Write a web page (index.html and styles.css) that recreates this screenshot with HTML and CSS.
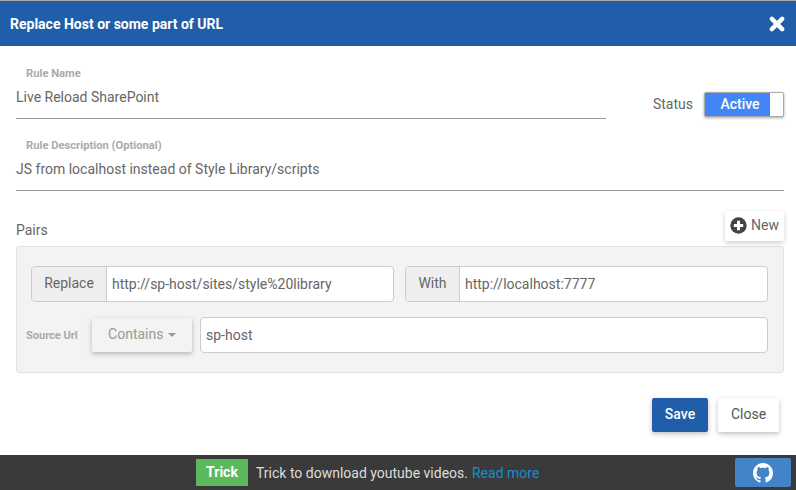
FILE: index.html
```html
<!DOCTYPE html>
<html lang="en">
<head>
  <meta charset="UTF-8" />
  <title>Replace Host</title>
  <link rel="stylesheet" href="styles.css">
</head>
<body>
  <div class="modal-header">
    <h1>Replace Host or some part of URL</h1>
    <svg class="close-x" viewBox="0 0 14 14" width="16" height="16"><path d="M2.5 2.5l9 9M11.5 2.5l-9 9" stroke="#fff" stroke-width="3.8" stroke-linecap="round" fill="none"/></svg>
  </div>

  <div class="modal-body">
    <div class="name-row">
      <div class="field name-field">
        <label>Rule Name</label>
        <div class="field-value">Live Reload SharePoint</div>
      </div>
      <div class="status">
        <span class="status-label">Status</span>
        <div class="switch">
          <span class="switch-on">Active</span>
          <span class="switch-handle"></span>
        </div>
      </div>
    </div>

    <div class="field desc-field">
      <label>Rule Description (Optional)</label>
      <div class="field-value">JS from localhost instead of Style Library/scripts</div>
    </div>

    <div class="pairs-head">
      <span>Pairs</span>
      <button class="new-btn">
        <svg viewBox="0 0 16 16" width="17" height="17"><circle cx="8" cy="8" r="7.7" fill="#444"/><path d="M8 3.6v8.8M3.6 8h8.8" stroke="#fff" stroke-width="2.8"/></svg>
        New
      </button>
    </div>

    <div class="pairs-panel">
      <div class="pair-row">
        <div class="input-group">
          <span class="addon addon-replace">Replace</span>
          <span class="input-text">http://sp-host/sites/style%20library</span>
        </div>
        <div class="input-group">
          <span class="addon addon-with">With</span>
          <span class="input-text">http://localhost:7777</span>
        </div>
      </div>
      <div class="source-row">
        <label>Source Url</label>
        <button class="contains-btn">Contains <i class="caret"></i></button>
        <div class="source-input">sp-host</div>
      </div>
    </div>

    <div class="actions">
      <button class="btn-save">Save</button>
      <button class="btn-close">Close</button>
    </div>
  </div>

  <div class="footer">
    <span class="badge">Trick</span>
    <span class="footer-text">Trick to download youtube videos.</span>
    <a class="footer-link">Read more</a>
    <button class="github">
      <svg viewBox="0 0 16 16" width="20" height="20"><path fill="#fff" d="M8 0C3.58 0 0 3.58 0 8c0 3.54 2.29 6.53 5.47 7.59.4.07.55-.17.55-.38 0-.19-.01-.82-.01-1.49-2.01.37-2.53-.49-2.69-.94-.09-.23-.48-.94-.82-1.13-.28-.15-.68-.52-.01-.53.63-.01 1.08.58 1.23.82.72 1.21 1.87.87 2.33.66.07-.52.28-.87.51-1.07-1.78-.2-3.64-.89-3.64-3.95 0-.87.31-1.59.82-2.15-.08-.2-.36-1.02.08-2.12 0 0 .67-.21 2.2.82.64-.18 1.32-.27 2-.27s1.36.09 2 .27c1.53-1.04 2.2-.82 2.2-.82.44 1.1.16 1.92.08 2.12.51.56.82 1.27.82 2.15 0 3.07-1.87 3.75-3.65 3.95.29.25.54.73.54 1.48 0 1.07-.01 1.93-.01 2.2 0 .21.15.46.55.38A8.01 8.01 0 0 0 16 8c0-4.42-3.58-8-8-8z"/></svg>
    </button>
  </div>
</body>
</html>
```

FILE: styles.css
```css
* {
  box-sizing: border-box;
}
html, body {
  height: 100%;
}
body {
  margin: 0;
  display: flex;
  flex-direction: column;
  overflow: hidden;
  font-family: Roboto, "Liberation Sans", sans-serif;
  font-size: 14px;
  color: #666;
  background: #fff;
}
button {
  font-family: inherit;
  border: none;
  cursor: pointer;
}
.modal-header {
  height: 46px;
  padding: 0 11px 0 10px;
  display: flex;
  align-items: center;
  justify-content: space-between;
  background: #205ea9;
  border-top: 1px solid #a9a9a9;
}
.modal-header h1 {
  margin: 0;
  font-size: 14px;
  font-weight: 700;
  color: #fff;
}
.modal-body {
  flex: 1;
  padding: 21px 12px 0 16px;
}
.name-row {
  display: flex;
  align-items: flex-end;
}
.field label {
  display: block;
  padding-left: 10px;
  font-size: 11.2px;
  line-height: 14px;
  font-weight: 700;
  color: #aaa;
}
.field-value {
  height: 38px;
  padding-top: 8px;
  line-height: 16px;
  font-size: 14px;
  color: #666;
  border-bottom: 1px solid #999;
}
.name-field {
  width: 590px;
}
.desc-field {
  margin-top: 20px;
}
.status {
  margin-left: 47px;
  margin-bottom: 2px;
  display: flex;
  align-items: center;
  gap: 11px;
  font-size: 14px;
  color: #666;
}
.status-label {
  padding-bottom: 2px;
}
.switch {
  width: 80px;
  height: 25px;
  display: flex;
  border: 1px solid #aaa;
  border-radius: 2px;
  background: #fff;
  box-shadow: 0 1px 3px rgba(0,0,0,0.35);
}
.switch-on {
  width: 65px;
  padding-left: 5px;
  text-align: center;
  line-height: 23px;
  font-size: 14px;
  font-weight: 500;
  color: #fff;
  background: #4285f4;
}
.switch-handle {
  flex: 1;
}
.pairs-head {
  margin-top: 20px;
  height: 35px;
  display: flex;
  justify-content: space-between;
  align-items: flex-start;
}
.pairs-head > span {
  margin-top: 11px;
  font-size: 14px;
  line-height: 16px;
  color: #666;
}
.new-btn {
  width: 59px;
  height: 30px;
  padding: 0 0 2px 5px;
  display: flex;
  align-items: center;
  gap: 4px;
  font-size: 14px;
  color: #666;
  background: #fff;
  border-radius: 2px;
  box-shadow: 0 2px 5px rgba(0,0,0,0.2);
}
.pairs-panel {
  height: 127px;
  padding: 19px 15px 0 14px;
  background: #f3f3f3;
  border: 1px solid #e0e0e0;
  border-radius: 3px;
}
.pair-row {
  display: flex;
  gap: 11px;
}
.input-group {
  flex: 1;
  height: 36px;
  display: flex;
  align-items: center;
  background: #fff;
  border: 1px solid #ccc;
  border-radius: 4px;
  overflow: hidden;
}
.addon {
  height: 100%;
  padding-bottom: 2px;
  display: flex;
  align-items: center;
  justify-content: center;
  font-size: 14px;
  color: #666;
  background: #eee;
  border-right: 1px solid #ccc;
}
.addon-replace {
  width: 75px;
}
.addon-with {
  width: 54px;
}
.input-text, .source-input {
  padding-left: 5px;
  font-size: 14px;
  color: #666;
}
.source-row {
  margin-top: 15px;
  display: flex;
  align-items: center;
}
.source-row label {
  width: 66px;
  margin-left: -5px;
  font-size: 11px;
  font-weight: 700;
  color: #aaa;
}
.contains-btn {
  width: 100px;
  height: 34px;
  margin-right: 8px;
  padding: 0 0 3px;
  font-size: 14px;
  color: #999;
  background: #f3f3f3;
  border-radius: 2px;
  box-shadow: 0 2px 5px rgba(0,0,0,0.25);
}
.caret {
  display: inline-block;
  margin-left: 1px;
  vertical-align: middle;
  border-top: 4px solid #999;
  border-left: 4px solid transparent;
  border-right: 4px solid transparent;
}
.source-input {
  flex: 1;
  height: 36px;
  line-height: 34px;
  background: #fff;
  border: 1px solid #ccc;
  border-radius: 4px;
}
.actions {
  margin-top: 25px;
  padding-right: 5px;
  display: flex;
  justify-content: flex-end;
  gap: 10px;
}
.actions button {
  height: 34px;
  padding: 0 0 3px;
  font-size: 14px;
  border-radius: 2px;
  box-shadow: 0 2px 5px rgba(0,0,0,0.25);
}
.btn-save {
  width: 56px;
  font-weight: 500;
  color: #fff;
  background: #205ea9;
}
.btn-close {
  width: 61px;
  color: #555;
  background: #fff;
}
.footer {
  height: 35px;
  padding: 0 5px 0 196px;
  display: flex;
  align-items: center;
  font-size: 14px;
  background: #3a3a3a;
}
.badge {
  width: 52px;
  height: 27px;
  line-height: 27px;
  text-align: center;
  font-weight: 700;
  color: #fff;
  background: #5cb85c;
}
.footer-text {
  margin-left: 8px;
  color: #ddd;
}
.footer-link {
  margin-left: 4px;
  color: #0f8fd6;
}
.github {
  width: 56px;
  height: 29px;
  margin-left: auto;
  padding: 0;
  display: flex;
  align-items: center;
  justify-content: center;
  background: #4384c8;
  border-radius: 2px;
}
```
